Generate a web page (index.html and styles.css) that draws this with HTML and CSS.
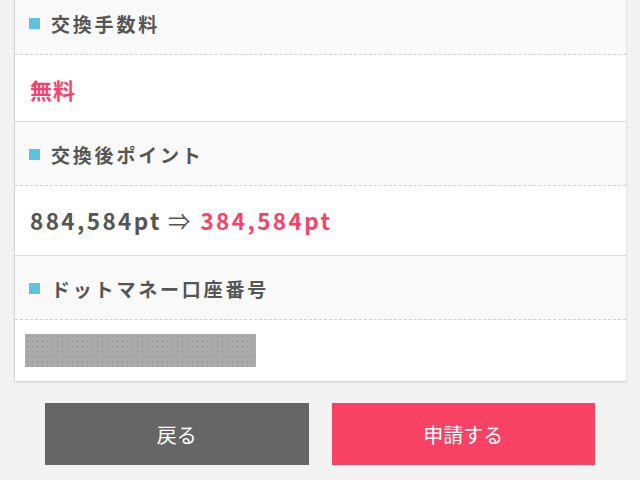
FILE: index.html
```html
<!DOCTYPE html>
<html lang="ja">
<head>
<meta charset="utf-8">
<link rel="stylesheet" href="styles.css">
</head>
<body>
<div class="card">
  <section class="sec">
    <h2 class="head"><span class="mark"></span>交換手数料</h2>
    <div class="body body-fee"><span class="red">無料</span></div>
  </section>
  <section class="sec">
    <h2 class="head"><span class="mark"></span>交換後ポイント</h2>
    <div class="body body-pt"><span class="num">884,584pt</span><span class="arrow">⇒</span><span class="num red">384,584pt</span></div>
  </section>
  <section class="sec">
    <h2 class="head"><span class="mark"></span>ドットマネー口座番号</h2>
    <div class="body body-acc"><div class="masked"></div></div>
  </section>
</div>
<div class="actions">
  <button class="btn btn-back">戻る</button>
  <button class="btn btn-apply">申請する</button>
</div>
</body>
</html>
```
FILE: styles.css
```css
html, body {
  margin: 0;
  padding: 0;
  background: #f2f2f2;
  font-family: "Noto Sans CJK JP", "Noto Sans", sans-serif;
  color: #555;
}
.card {
  margin: -9px 14px 0 15px;
  background: #fff;
  box-shadow: 0 1px 2px rgba(0, 0, 0, 0.18), -1px 0 1px rgba(0, 0, 0, 0.06);
}
.sec {
  border-bottom: 1px solid #dcdcdc;
}
.sec:last-child {
  border-bottom: none;
}
.head {
  margin: 0;
  height: 64px;
  display: flex;
  align-items: center;
  padding: 2px 0 0 14px;
  box-sizing: border-box;
  background: #f9f9f9;
  border-bottom: 1px dashed #d2d2d2;
  font-size: 19px;
  font-weight: bold;
  letter-spacing: 2.8px;
  color: #555;
}
.mark {
  width: 11px;
  height: 11px;
  background: #5bc4dc;
  margin-right: 11px;
  flex: none;
}
.body {
  background: #fff;
  padding: 0 15px;
  display: flex;
  align-items: center;
}
.body-fee {
  height: 66px;
  font-size: 22px;
  font-weight: bold;
  letter-spacing: 1px;
  padding-top: 2px;
  box-sizing: border-box;
}
.body-pt {
  height: 69px;
  font-size: 22.5px;
  font-weight: bold;
  letter-spacing: 2.4px;
  box-sizing: border-box;
  padding-bottom: 2px;
}
.red {
  color: #f6436a;
}
.arrow {
  font-weight: normal;
  margin: 0 10px 0 6px;
  letter-spacing: 0;
}
.body-acc {
  height: 61px;
  padding: 0 10px;
}
.masked {
  width: 231px;
  height: 33px;
  background-color: #aaa;
  background-image: radial-gradient(circle, #8e8e8e 0.6px, transparent 0.9px);
  background-size: 5px 5px;
}
.actions {
  display: flex;
  gap: 23px;
  padding: 22px 45px 0;
}
.btn {
  flex: 1;
  height: 62px;
  border: none;
  color: #fff;
  font-family: "Noto Sans CJK JP", sans-serif;
  font-size: 20px;
  padding: 0;
}
.btn-back {
  background: #666;
}
.btn-apply {
  background: #f84263;
}
```
